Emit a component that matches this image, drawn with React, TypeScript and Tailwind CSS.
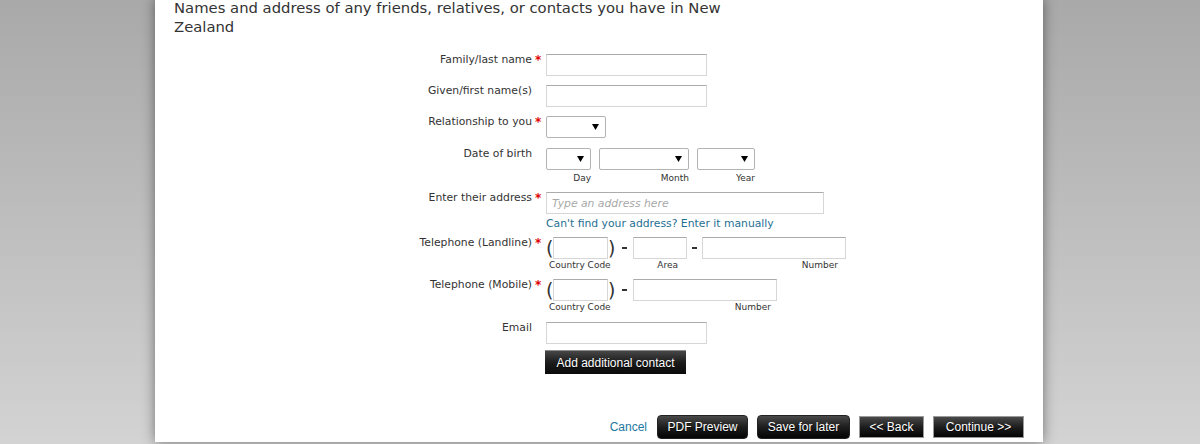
import React from "react";

const labelFont = { fontFamily: '"DejaVu Sans", Verdana, sans-serif' };
const btnFont = { fontFamily: '"Liberation Sans", Arial, sans-serif' };

function Label({ text, req }: { text: string; req?: boolean }) {
  return (
    <div className="w-[358px] shrink-0 text-right text-[10.8px] leading-[11px] text-[#333]">
      <span className="relative">
        {text}
        {req && (
          <span className="absolute left-full top-[1px] ml-[3px] text-[#e00000] text-[12px] leading-[12px] font-bold">*</span>
        )}
      </span>
    </div>
  );
}

function TextBox({ w, placeholder }: { w: string; placeholder?: string }) {
  return (
    <div
      className={`${w} h-[22px] bg-white border border-[#d6d6d6] border-t-[#ababab] flex items-center pl-[5px] pt-[3px] text-[10.8px] italic text-[#a8a8a8]`}
    >
      {placeholder}
    </div>
  );
}

function Select({ w }: { w: string }) {
  return (
    <div className={`${w} h-[22px] bg-white border border-[#b3b3b3] rounded-[2px] flex items-center justify-end pr-[6px]`}>
      <svg width="7" height="6" viewBox="0 0 7 6">
        <path d="M0 0 L7 0 L3.5 6 Z" fill="#000" />
      </svg>
    </div>
  );
}

function Sub({ text, cls }: { text: string; cls?: string }) {
  return <div className={`text-[9px] leading-[10px] text-[#333] ${cls ?? "mt-[3px]"}`}>{text}</div>;
}

function Paren({ ch }: { ch: string }) {
  return (
    <span className="w-[7px] h-[22px] text-[19px] leading-[22px] text-[#333] text-center" style={labelFont}>
      {ch}
    </span>
  );
}

function Dash({ w }: { w: string }) {
  return (
    <span className={`${w} h-[22px] flex items-center justify-center`}>
      <span className="block w-[5px] h-[2px] bg-[#333]" />
    </span>
  );
}

function CountryCode() {
  return (
    <div className="flex flex-col">
      <div className="flex items-center h-[22px]">
        <Paren ch="(" />
        <TextBox w="w-[55px]" />
        <Paren ch=")" />
      </div>
      <Sub text="Country Code" cls="mt-[1px] pl-[3px]" />
    </div>
  );
}

function DarkButton({
  children,
  w,
  rounded,
  h,
}: {
  children: React.ReactNode;
  w: string;
  rounded?: boolean;
  h: string;
}) {
  return (
    <button
      className={`${w} ${h} ${
        rounded ? "rounded-[4px] border border-[#222]" : "border border-[#9a9a9a]"
      } bg-gradient-to-b from-[#4a4a4a] via-[#1e1e1e] to-[#050505] text-white text-[12px] flex items-center justify-center [text-shadow:0_1px_1px_rgba(0,0,0,0.8)]`}
      style={btnFont}
    >
      {children}
    </button>
  );
}

export default function App() {
  return (
    <div className="h-[444px] overflow-hidden bg-gradient-to-b from-[#a9a9a9] to-[#d3d3d3]" style={labelFont}>
      <div className="ml-[155px] w-[888px] h-full bg-white shadow-[0_0_12px_rgba(0,0,0,0.45)] px-[19px]">
        <h2 className="w-[580px] -mt-[2px] text-[14.8px] leading-[19px] text-[#333] font-normal">
          Names and address of any friends, relatives, or contacts you have in New Zealand
        </h2>

        <div className="mt-[18px] flex flex-col">
          <div className="flex gap-[14px] h-[31px]">
            <Label text="Family/last name" req />
            <TextBox w="w-[161px]" />
          </div>
          <div className="flex gap-[14px] h-[31px]">
            <Label text="Given/first name(s)" />
            <TextBox w="w-[161px]" />
          </div>
          <div className="flex gap-[14px] h-[32px]">
            <Label text="Relationship to you" req />
            <Select w="w-[60px]" />
          </div>
          <div className="flex gap-[14px] h-[44px]">
            <Label text="Date of birth" />
            <div className="flex gap-[8px]">
              <div className="flex flex-col">
                <Select w="w-[45px]" />
                <Sub text="Day" cls="mt-[3px] text-right" />
              </div>
              <div className="flex flex-col">
                <Select w="w-[90px]" />
                <Sub text="Month" cls="mt-[3px] text-right" />
              </div>
              <div className="flex flex-col">
                <Select w="w-[58px]" />
                <Sub text="Year" cls="mt-[3px] text-right" />
              </div>
            </div>
          </div>
          <div className="flex gap-[14px] h-[45px]">
            <Label text="Enter their address" req />
            <div className="flex flex-col">
              <TextBox w="w-[278px]" placeholder="Type an address here" />
              <a className="mt-[3px] text-[10.8px] leading-[13px] text-[#1f6f93] cursor-pointer">
                Can't find your address? Enter it manually
              </a>
            </div>
          </div>
          <div className="flex gap-[14px] h-[42px]">
            <Label text="Telephone (Landline)" req />
            <div className="flex items-start">
              <CountryCode />
              <Dash w="w-[18px]" />
              <div className="flex flex-col">
                <TextBox w="w-[54px]" />
                <Sub text="Area" cls="mt-[1px] text-right pr-[9px]" />
              </div>
              <Dash w="w-[15px]" />
              <div className="flex flex-col">
                <TextBox w="w-[144px]" />
                <Sub text="Number" cls="mt-[1px] text-right pr-[8px]" />
              </div>
            </div>
          </div>
          <div className="flex gap-[14px] h-[43px]">
            <Label text="Telephone (Mobile)" req />
            <div className="flex items-start">
              <CountryCode />
              <Dash w="w-[18px]" />
              <div className="flex flex-col">
                <TextBox w="w-[144px]" />
                <Sub text="Number" cls="mt-[1px] text-right pr-[6px]" />
              </div>
            </div>
          </div>
          <div className="flex gap-[14px] h-[29px]">
            <Label text="Email" />
            <TextBox w="w-[161px]" />
          </div>
          <div className="flex gap-[13px]">
            <div className="w-[358px] shrink-0" />
            <button
              className="w-[141px] h-[24px] -mt-[1px] border-t border-[#8a8a8a] bg-gradient-to-b from-[#474747] via-[#1c1c1c] to-[#0a0a0a] text-white text-[12px] [text-shadow:0_1px_1px_rgba(0,0,0,0.8)]"
              style={btnFont}
            >
              Add additional contact
            </button>
          </div>
        </div>

        <div className="mt-[41px] flex justify-end items-center gap-[9px]">
          <a className="text-[12px] text-[#2578a0] mr-[1px] cursor-pointer" style={btnFont}>
            Cancel
          </a>
          <DarkButton w="w-[91px]" h="h-[24px]" rounded>
            PDF Preview
          </DarkButton>
          <DarkButton w="w-[93px]" h="h-[24px]" rounded>
            Save for later
          </DarkButton>
          <DarkButton w="w-[65px]" h="h-[22px]">
            &lt;&lt; Back
          </DarkButton>
          <DarkButton w="w-[91px]" h="h-[22px]">
            Continue &gt;&gt;
          </DarkButton>
        </div>
      </div>
    </div>
  );
}
